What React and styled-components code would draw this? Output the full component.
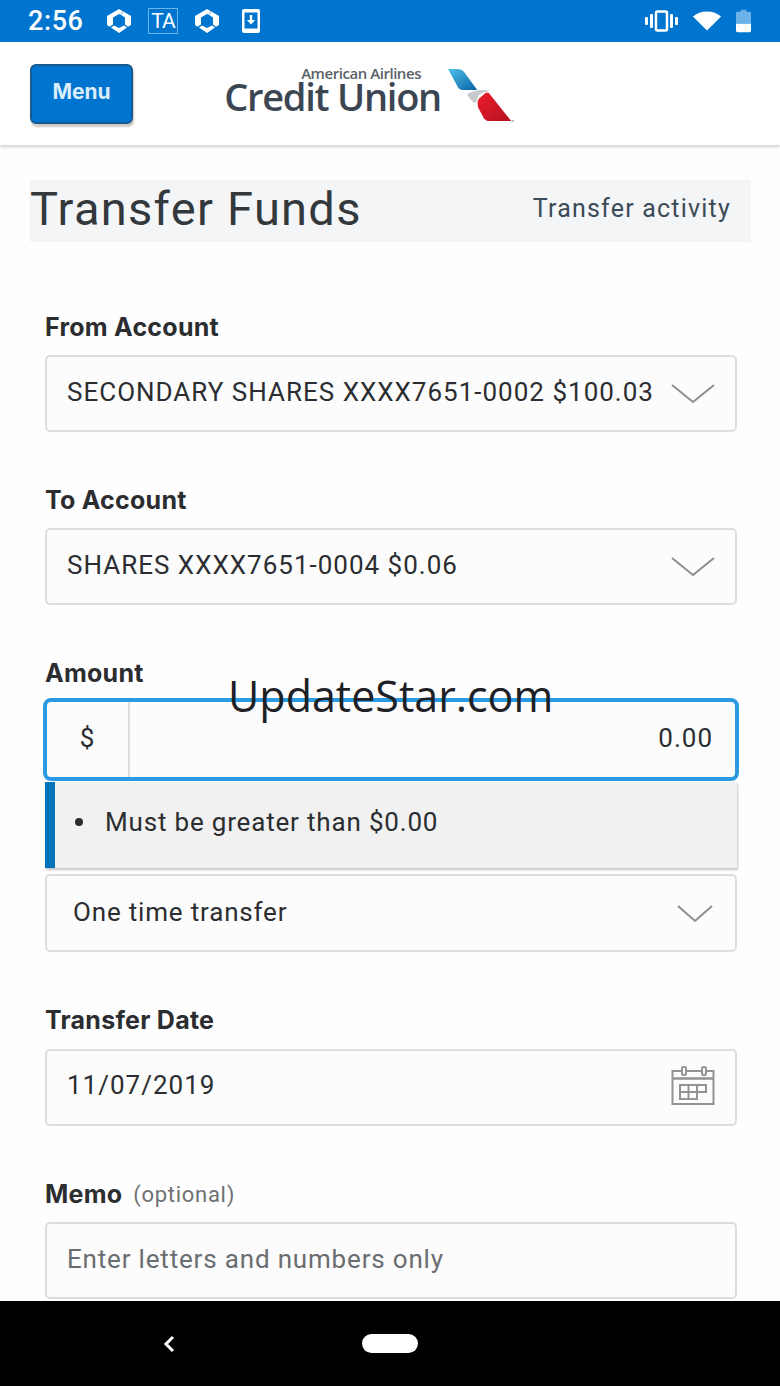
import React from "react";
import styled, { createGlobalStyle } from "styled-components";

const GlobalStyle = createGlobalStyle`
  html, body {
    margin: 0;
    padding: 0;
    background: #ffffff;
  }
  * {
    box-sizing: border-box;
  }
`;

const Screen = styled.div`
  position: relative;
  width: 780px;
  height: 1386px;
  display: flex;
  flex-direction: column;
  overflow: hidden;
  background: #fefefe;
  font-family: Roboto, "Liberation Sans", sans-serif;
  color: #26292c;
`;

const StatusBar = styled.div`
  height: 42px;
  flex: none;
  display: flex;
  align-items: center;
  padding: 0 29px 0 28px;
  background: #0075cf;
  color: #ffffff;
`;

const Clock = styled.span`
  width: 78px;
  font-size: 27px;
  font-weight: 500;
  letter-spacing: 0.6px;
`;

const StatusLeft = styled.div`
  flex: 1;
  display: flex;
  align-items: center;
  gap: 16px;
`;

const StatusRight = styled.div`
  display: flex;
  align-items: center;
  gap: 14px;
`;

const TaBadge = styled.span`
  width: 30px;
  height: 26px;
  display: flex;
  align-items: center;
  justify-content: center;
  border: 1px solid #6bb6ee;
  font-size: 21px;
  letter-spacing: -1px;
`;

const Header = styled.header`
  height: 103px;
  flex: none;
  display: flex;
  align-items: flex-start;
  padding: 22px 0 0 30px;
  background: #ffffff;
  box-shadow: 0 2px 3px rgba(0, 0, 0, 0.18);
  position: relative;
`;

const MenuButton = styled.button`
  width: 103px;
  height: 60px;
  padding: 0 0 6px;
  border: 2px solid #155a90;
  border-radius: 6px;
  background: #0075cf;
  box-shadow: 1px 3px 2px #cfcbc4;
  color: #d9edfb;
  font-family: Inter, "Noto Sans", sans-serif;
  font-size: 21px;
  font-weight: 700;
`;

const Logo = styled.div`
  margin: 3px 0 0 91px;
  display: flex;
  align-items: flex-start;
`;

const LogoWords = styled.div`
  width: 217px;
  display: flex;
  flex-direction: column;
  align-items: flex-end;
  color: #3c4653;
  font-family: "Open Sans", sans-serif;
`;

const LogoSmall = styled.span`
  margin: -1px 20px 1px 0;
  font-size: 15px;
  line-height: 15px;
  font-weight: 600;
  letter-spacing: -0.45px;
  color: #5a6169;
`;

const LogoLarge = styled.span`
  font-size: 38px;
  line-height: 28px;
  font-weight: 600;
  letter-spacing: -1.25px;
  white-space: nowrap;
`;

const Content = styled.main`
  flex: 1;
  min-height: 0;
  overflow: hidden;
  padding: 35px 29px 0 30px;
`;

const TitleBand = styled.div`
  height: 62px;
  display: flex;
  align-items: center;
  justify-content: space-between;
  padding: 0 20px 6px 0;
  background: #f3f5f7;
`;

const PageTitle = styled.h1`
  margin: 0;
  font-size: 47px;
  font-weight: 400;
  letter-spacing: 1.3px;
  color: #33383d;
`;

const ActivityLink = styled.span`
  font-size: 25px;
  letter-spacing: 1.2px;
  color: #3b4a57;
`;

const Form = styled.div`
  margin-top: 70px;
  padding: 0 14px 0 15px;
  display: flex;
  flex-direction: column;
`;

const Field = styled.div`
  margin-bottom: ${(props) => props.$gap || "53px"};
`;

const Label = styled.div`
  height: 30px;
  margin-bottom: ${(props) => props.$gap || "13px"};
  display: flex;
  align-items: center;
  gap: 11px;
  font-family: Inter, "Noto Sans", sans-serif;
  font-size: 25px;
  font-weight: 700;
  letter-spacing: 0.25px;
  color: #2b2d30;
`;

const Optional = styled.span`
  font-family: Roboto, sans-serif;
  font-size: 22px;
  font-weight: 400;
  letter-spacing: 0.7px;
  color: #6d7074;
`;

const Control = styled.div`
  height: ${(props) => props.$height || "77px"};
  margin-top: ${(props) => props.$top || "0"};
  display: flex;
  align-items: center;
  justify-content: space-between;
  padding: 0 22px ${(props) => props.$lift || "4px"} ${(props) => props.$inset || "20px"};
  border: 2px solid #dcdddd;
  border-radius: 5px;
  background: #fcfcfc;
  font-size: 26px;
  letter-spacing: ${(props) => props.$tracking || "1px"};
  color: ${(props) => (props.$muted ? "#6a6d70" : "#2b2d30")};
  white-space: nowrap;
`;

const AmountBox = styled.div`
  height: 83px;
  margin: -2px -2px 0 -2px;
  display: flex;
  border: 4px solid #2c9ae2;
  border-radius: 8px;
  background: #fcfcfc;
  font-size: 26px;
  letter-spacing: 1px;
  color: #2b2d30;
`;

const Currency = styled.div`
  width: 83px;
  display: flex;
  align-items: center;
  justify-content: center;
  padding-bottom: 4px;
  border-right: 2px solid #dbdcdc;
`;

const AmountValue = styled.div`
  flex: 1;
  display: flex;
  align-items: center;
  justify-content: flex-end;
  padding: 0 22px 4px 0;
`;

const ErrorBox = styled.div`
  height: 86px;
  margin-top: 1px;
  display: flex;
  align-items: center;
  gap: 22px;
  padding: 0 0 6px 20px;
  border-left: 10px solid #0074bb;
  background: #f1f1f1;
  box-shadow: 1px 2px 2px rgba(0, 0, 0, 0.22);
  font-size: 26px;
  letter-spacing: 0.82px;
  color: #2b2d30;
`;

const Bullet = styled.span`
  width: 8px;
  height: 8px;
  border-radius: 50%;
  background: #2b2d30;
`;

const Watermark = styled.div`
  position: absolute;
  top: 666px;
  left: 228px;
  font-family: "Open Sans", sans-serif;
  font-size: 43px;
  line-height: 60px;
  color: #1d2126;
  white-space: nowrap;
`;

const NavBar = styled.nav`
  height: 85px;
  flex: none;
  display: flex;
  align-items: center;
  padding: 0 0 0 161px;
  background: #000000;
`;

const HomePill = styled.div`
  width: 56px;
  height: 19px;
  margin-left: 185px;
  border-radius: 10px;
  background: #ffffff;
`;

const DownloadSvg = styled.svg`
  margin-left: 6px;
`;

const TailSvg = styled.svg`
  margin: 2px 0 0 7px;
`;

const ChevronSvg = styled.svg`
  margin: 4px ${(props) => props.$right || "-2px"} 0 0;
`;

const CalendarSvg = styled.svg`
  margin: 3px -2px 0 0;
`;

const HexIcon = () => (
  <svg width="26" height="26" viewBox="0 0 26 26">
    <path
      fill="#fff"
      fillRule="evenodd"
      d="M13 1l4 2.200-2.200 3.600L13 6 7 9.400v7.200l-3.500 2.200L1 17V8zM17.500 3.500L25 8v9l-3 1.800-3-2.200V9.400l-4-2.400zM5 19.500l3-2 5 2.600 5-2.600 3 2L13 25z"
    />
  </svg>
);

const DownloadIcon = () => (
  <DownloadSvg width="18" height="24" viewBox="0 0 18 24">
    <rect x="0" y="0" width="18" height="24" rx="2" fill="#fff" />
    <rect x="2.500" y="3.500" width="13" height="16" fill="#0075cf" />
    <path fill="#fff" d="M7.800 6h2.400v5h3L9 15.500 4.800 11h3z" />
  </DownloadSvg>
);

const VibrateIcon = () => (
  <svg width="33" height="22" viewBox="0 0 33 22">
    <rect x="11" y="1.500" width="11" height="19" rx="1.500" fill="none" stroke="#fff" strokeWidth="2.500" />
    <rect x="5" y="4" width="3" height="14" rx="1" fill="#fff" />
    <rect x="25" y="4" width="3" height="14" rx="1" fill="#fff" />
    <rect x="0" y="7" width="3" height="8" rx="1" fill="#fff" />
    <rect x="30" y="7" width="3" height="8" rx="1" fill="#fff" />
  </svg>
);

const WifiIcon = () => (
  <svg width="30" height="20" viewBox="0 0 32 22">
    <path fill="#fff" d="M16 21.500L.5 6C4.500 2.500 10 .5 16 .5s11.500 2 15.500 5.500z" />
  </svg>
);

const BatteryIcon = () => (
  <svg width="15" height="24" viewBox="0 0 16 24">
    <path fill="#6bb2e8" d="M5 0h6v2h3.500a1.500 1.500 0 0 1 1.500 1.500V15H0V3.500A1.500 1.500 0 0 1 1.500 2H5z" />
    <path fill="#fff" d="M0 15h16v7.500a1.500 1.500 0 0 1-1.500 1.500h-13A1.500 1.500 0 0 1 0 22.500z" />
  </svg>
);

const TailLogo = () => (
  <TailSvg width="68" height="55" viewBox="0 0 72 58">
    <defs>
      <linearGradient id="tailBlue" x1="0" y1="0" x2="1" y2="1">
        <stop offset="0" stopColor="#4cc1e6" />
        <stop offset="1" stopColor="#0a62a8" />
      </linearGradient>
      <linearGradient id="tailRed" x1="0" y1="0" x2="1" y2="1">
        <stop offset="0" stopColor="#ee1c2b" />
        <stop offset="1" stopColor="#b3121f" />
      </linearGradient>
    </defs>
    <path fill="url(#tailBlue)" d="M0 0h10c3 0 5 1 7 3l14 19H15c-2 0-3-1-4-2z" />
    <path fill="#c7cbce" d="M20 27c6-5 17-6 25-4l-8 2c-4 1-6 4-6 9l-3 2c-4-3-6-6-8-9z" />
    <path fill="url(#tailRed)" d="M33 31l7-6h3l24 30H44c-3 0-4-1-6-3l-6-11c-1-4-1-7 1-10z" />
    <circle cx="69" cy="55" r="1" fill="#9aa0a5" />
  </TailSvg>
);

const Chevron = () => (
  <ChevronSvg width="44" height="22" viewBox="0 0 44 22">
    <path d="M1 2l21 17L43 2" fill="none" stroke="#8d8f90" strokeWidth="2" />
  </ChevronSvg>
);

const ChevronSmall = () => (
  <ChevronSvg $right="0" width="36" height="20" viewBox="0 0 36 20">
    <path d="M1 2l17 15L35 2" fill="none" stroke="#8d8f90" strokeWidth="2" />
  </ChevronSvg>
);

const CalendarIcon = () => (
  <CalendarSvg width="44" height="40" viewBox="0 0 44 40">
    <g fill="none" stroke="#939393" strokeWidth="2">
      <rect x="1.500" y="5" width="41" height="33" />
      <path strokeWidth="2.500" d="M1.500 12.500h41" />
      <rect x="11" y="1" width="4" height="8" rx="1.500" fill="#fcfcfc" />
      <rect x="31" y="1" width="4" height="8" rx="1.500" fill="#fcfcfc" />
      <path d="M9 19h26v7h-9v7H9zM9 26h17M17.500 19v14M26 19v7" />
    </g>
  </CalendarSvg>
);

const BackIcon = () => (
  <svg width="16" height="20" viewBox="0 0 16 20">
    <path d="M12 3l-7 7 7 7" fill="none" stroke="#fff" strokeWidth="3" />
  </svg>
);

const App = () => {
  return (
    <Screen>
      <GlobalStyle />
      <StatusBar>
        <Clock>2:56</Clock>
        <StatusLeft>
          <HexIcon />
          <TaBadge>TA</TaBadge>
          <HexIcon />
          <DownloadIcon />
        </StatusLeft>
        <StatusRight>
          <VibrateIcon />
          <WifiIcon />
          <BatteryIcon />
        </StatusRight>
      </StatusBar>
      <Header>
        <MenuButton>Menu</MenuButton>
        <Logo>
          <LogoWords>
            <LogoSmall>American Airlines</LogoSmall>
            <LogoLarge>Credit Union</LogoLarge>
          </LogoWords>
          <TailLogo />
        </Logo>
      </Header>
      <Content>
        <TitleBand>
          <PageTitle>Transfer Funds</PageTitle>
          <ActivityLink>Transfer activity</ActivityLink>
        </TitleBand>
        <Form>
          <Field>
            <Label>From Account</Label>
            <Control>
              SECONDARY SHARES XXXX7651-0002 $100.03
              <Chevron />
            </Control>
          </Field>
          <Field>
            <Label>To Account</Label>
            <Control>
              SHARES XXXX7651-0004 $0.06
              <Chevron />
            </Control>
          </Field>
          <Field>
            <Label $gap="12px">Amount</Label>
            <AmountBox>
              <Currency>$</Currency>
              <AmountValue>0.00</AmountValue>
            </AmountBox>
            <ErrorBox>
              <Bullet />
              Must be greater than $0.00
            </ErrorBox>
            <Control $height="78px" $inset="26px" $top="6px" $tracking="0.82px" $lift="2px">
              One time transfer
              <ChevronSmall />
            </Control>
          </Field>
          <Field>
            <Label $gap="14px">Transfer Date</Label>
            <Control $lift="6px">
              11/07/2019
              <CalendarIcon />
            </Control>
          </Field>
          <Field>
            <Label>
              Memo <Optional>(optional)</Optional>
            </Label>
            <Control $muted $tracking="0.82px">Enter letters and numbers only</Control>
          </Field>
        </Form>
      </Content>
      <Watermark>UpdateStar.com</Watermark>
      <NavBar>
        <BackIcon />
        <HomePill />
      </NavBar>
    </Screen>
  );
};

export default App;
